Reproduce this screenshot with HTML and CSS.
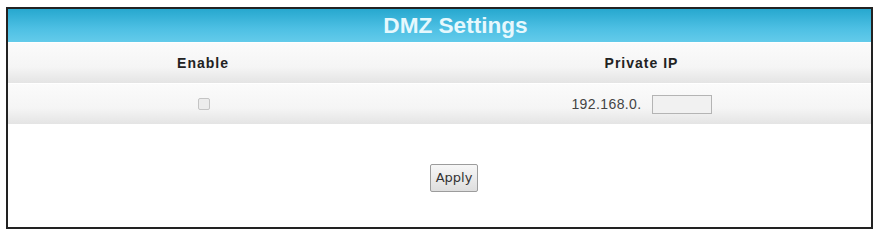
FILE: index.html
```html
<!DOCTYPE html>
<html>
<head>
<meta charset="utf-8">
<link rel="stylesheet" href="styles.css">
</head>
<body>
<div class="panel">
  <div class="title">DMZ Settings</div>
  <div class="row head">
    <div class="col c1">Enable</div>
    <div class="col c2">Private IP</div>
  </div>
  <div class="row data">
    <div class="col c1"><span class="check"></span></div>
    <div class="col c2"><span class="ip">192.168.0.</span><span class="field"></span></div>
  </div>
  <div class="actions">
    <button class="apply">Apply</button>
  </div>
</div>
</body>
</html>
```
FILE: styles.css
```css
html, body { margin: 0; padding: 0; background: #fff; }
body { padding: 7px 0 0 6px; font-family: "Liberation Sans", Arial, sans-serif; }
.panel {
  width: 863px;
  height: 218px;
  border: 2px solid #222;
  display: flex;
  flex-direction: column;
  background: #fff;
}
.title {
  height: 33px;
  background: linear-gradient(#27a8cf, #4ec0e4 60%, #63cbea);
  color: #e6f8fd;
  font-weight: bold;
  font-size: 22.6px;
  display: flex;
  align-items: center;
  justify-content: center;
  border-bottom: 1px solid #fff;
  padding-left: 32px;
}
.row {
  display: grid;
  grid-template-columns: 390px 1fr;
  height: 40px;
  background: linear-gradient(#fbfbfb, #f5f5f5 60%, #e4e4e4);
  border-bottom: 1px solid #fff;
}
.col { display: flex; align-items: center; justify-content: center; }
.head .col {
  font-weight: bold;
  font-size: 14px;
  letter-spacing: 1px;
  color: #222;
}
.c2 { padding-left: 14px; }
.check {
  width: 10px;
  height: 10px;
  border: 1px solid #c4c4c4;
  background: #ececec;
  border-radius: 2px;
  margin-left: 2px;
}
.ip { font-size: 14px; color: #444; letter-spacing: 0.4px; }
.field {
  width: 58px;
  height: 17px;
  border: 1px solid #b4b4b4;
  background: #f1f1f1;
  margin-left: 10px;
}
.actions {
  flex: 1;
  display: flex;
  align-items: center;
  justify-content: center;
  padding-left: 29px;
  padding-top: 3px;
}
.apply {
  width: 48px;
  height: 28px;
  padding: 0;
  font-family: "DejaVu Sans", Tahoma, sans-serif;
  font-size: 13px;
  color: #333;
  background: linear-gradient(#f7f7f7, #dedede);
  border: 1px solid #9c9c9c;
  border-radius: 2px;
}
```
